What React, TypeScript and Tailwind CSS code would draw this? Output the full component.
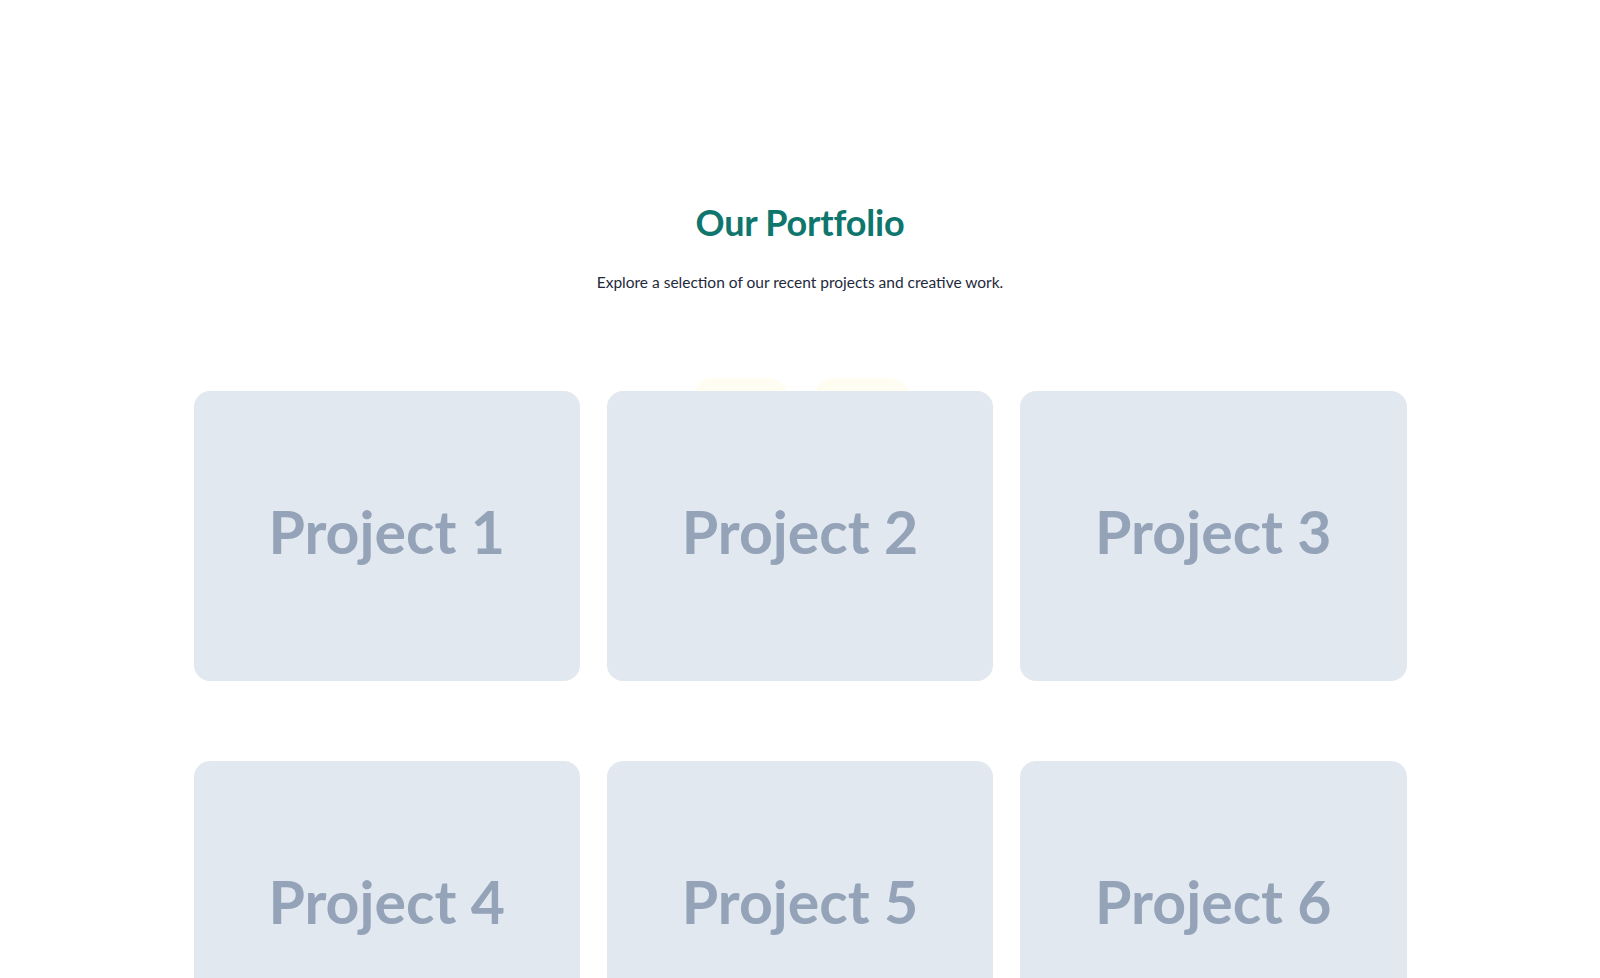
import React from 'react';

const projects = [1, 2, 3, 4, 5, 6];

const App: React.FC = () => {
    return (
        <div className="min-h-screen bg-white font-['Lato',sans-serif]">
            <section className="pt-[197px]">
                <div className="text-center">
                    <h2 className="text-[36px] leading-[50px] font-bold text-[#0f766e] tracking-[-0.2px]">Our Portfolio</h2>
                    <p className="mt-[23px] text-[15.5px] leading-6 text-[#1e293b]">
                        Explore a selection of our recent projects and creative work.
                    </p>
                </div>

                {/* filter pills, mostly hidden under the grid */}
                <div className="mt-[84px] flex justify-center gap-[26px] pl-[2px]">
                    <div className="w-[95px] h-[40px] rounded-[22px] bg-[#fffdf2]" />
                    <div className="w-[96px] h-[40px] rounded-[22px] bg-[#fffdf2]" />
                </div>

                <div className="relative z-10 -mt-[27px] mx-auto w-[1213px] grid grid-cols-3 gap-x-[27px] gap-y-[80px]">
                    {projects.map(n => (
                        <div
                            key={n}
                            className="h-[290px] rounded-[16px] bg-[#e2e8f0] flex items-center justify-center"
                        >
                            <span className="text-[59px] leading-none font-bold text-[#94a3b8] -mt-[10px]">
                                Project {n}
                            </span>
                        </div>
                    ))}
                </div>
            </section>
        </div>
    );
};

export default App;
